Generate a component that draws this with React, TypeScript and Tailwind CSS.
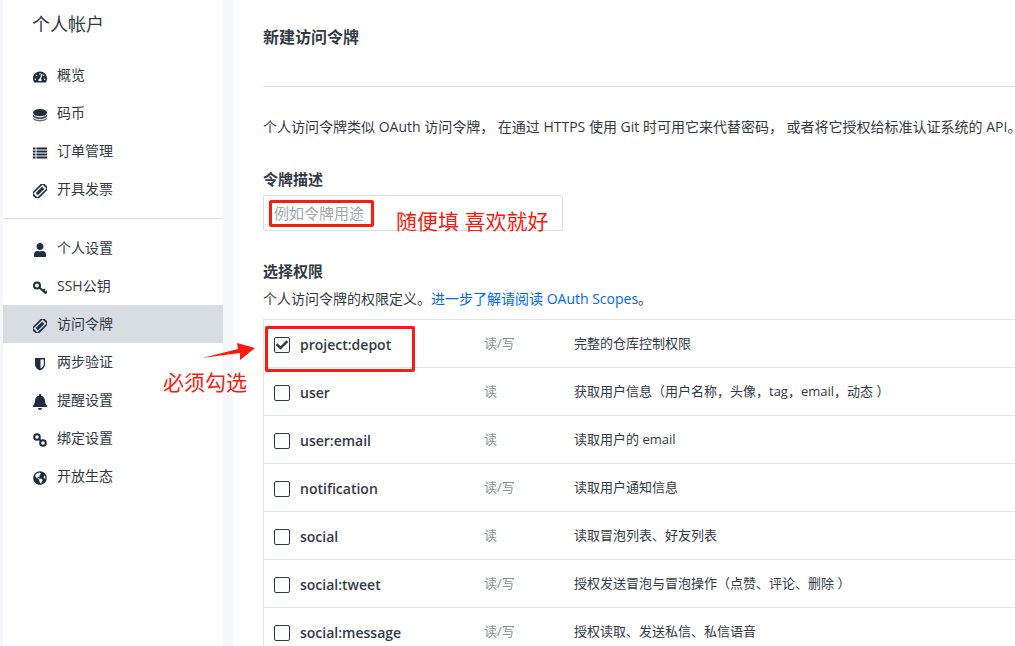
import { FaTachometerAlt, FaUser, FaBell, FaGlobeAmericas, FaCheck } from "react-icons/fa";

function CoinsIcon({ className }: { className?: string }) {
    return (
        <svg className={className} viewBox="0 0 14 14" fill="currentColor">
            <ellipse cx="7" cy="4.6" rx="7" ry="3.6" />
            <path d="M0 6.6C1 8.4 3.8 9.4 7 9.4S13 8.4 14 6.6V8C14 9.6 11 11 7 11S0 9.6 0 8Z" opacity="0.85" />
            <path d="M0 9.4C1 11 3.8 11.8 7 11.8S13 11 14 9.4V10.6C14 12.2 11 13.4 7 13.4S0 12.2 0 10.6Z" opacity="0.7" />
        </svg>
    );
}

function ListIcon({ className }: { className?: string }) {
    return (
        <svg className={className} viewBox="0 0 14 14" fill="currentColor">
            <path d="M0 1.5H2.5V3.5H0ZM3.5 1.5H14V3.5H3.5ZM0 4.5H2.5V6.5H0ZM3.5 4.5H14V6.5H3.5ZM0 7.5H2.5V9.5H0ZM3.5 7.5H14V9.5H3.5ZM0 10.5H2.5V12.5H0ZM3.5 10.5H14V12.5H3.5Z" />
        </svg>
    );
}

function LinkIcon({ className }: { className?: string }) {
    return (
        <svg className={className} viewBox="0 0 14 14" fill="none" stroke="currentColor" strokeWidth="2">
            <circle cx="4" cy="4" r="2.8" />
            <circle cx="10" cy="10" r="2.8" />
            <path d="M5.5 5.5L8.5 8.5" />
        </svg>
    );
}

function TicketIcon({ className }: { className?: string }) {
    return (
        <svg className={className} viewBox="0 0 14 14" fill="currentColor">
            <g transform="rotate(-45 7 7)">
                <path fillRule="evenodd" d="M-2.5 2.5H16.5V5.5A1.5 1.5 0 0 0 16.5 8.5V11.5H-2.5V8.5A1.5 1.5 0 0 0 -2.5 5.5ZM0.5 4.2V9.8H13.5V4.2Z" />
                <rect x="2.5" y="5.5" width="9" height="3" />
            </g>
        </svg>
    );
}

function KeyIcon({ className }: { className?: string }) {
    return (
        <svg className={className} viewBox="0 0 14 14" fill="none" stroke="currentColor" strokeWidth="2">
            <circle cx="4" cy="4.5" r="3" />
            <path d="M6.2 6.6L13 12.5M10.2 10L11.8 8.2M12.4 12L14 10.2" />
        </svg>
    );
}

function ShieldIcon({ className }: { className?: string }) {
    return (
        <svg className={className} viewBox="0 0 14 14" fill="currentColor">
            <path fillRule="evenodd" d="M2 1H12V7C12 10.5 9.5 12.5 7 13.5C4.5 12.5 2 10.5 2 7ZM7.5 2.5V11.5C9.5 10.5 10.8 9 10.8 7V2.5Z" />
        </svg>
    );
}

function BellIcon() {
    return <FaBell className="w-[16px] h-[16px] -ml-px text-[#1f2d3d]" />;
}

const navTop = [
    { icon: FaTachometerAlt, label: "概览" },
    { icon: CoinsIcon, label: "码币" },
    { icon: ListIcon, label: "订单管理" },
    { icon: TicketIcon, label: "开具发票" },
];

const navBottom = [
    { icon: FaUser, label: "个人设置" },
    { icon: KeyIcon, label: "SSH公钥" },
    { icon: TicketIcon, label: "访问令牌", active: true },
    { icon: ShieldIcon, label: "两步验证" },
    { icon: BellIcon, label: "提醒设置" },
    { icon: LinkIcon, label: "绑定设置" },
    { icon: FaGlobeAmericas, label: "开放生态" },
];

const scopes = [
    { name: "project:depot", perm: "读/写", desc: "完整的仓库控制权限", checked: true },
    { name: "user", perm: "读", desc: "获取用户信息（用户名称，头像，tag，email，动态 ）" },
    { name: "user:email", perm: "读", desc: "读取用户的 email" },
    { name: "notification", perm: "读/写", desc: "读取用户通知信息" },
    { name: "social", perm: "读", desc: "读取冒泡列表、好友列表" },
    { name: "social:tweet", perm: "读/写", desc: "授权发送冒泡与冒泡操作（点赞、评论、删除 ）" },
    { name: "social:message", perm: "读/写", desc: "授权读取、发送私信、私信语音" },
];

function NavRow({ item }: { item: { icon: any; label: string; active?: boolean } }) {
    return (
        <div className={`h-[38px] flex items-center pl-[30px] pb-[2px] text-[14px] text-[#323a45] ${item.active ? "bg-[#d8dce3]" : ""}`}>
            <span className="w-[24px] flex mt-[5px]">
                <item.icon className="w-[14px] h-[14px] text-[#1f2d3d]" />
            </span>
            {item.label}
        </div>
    );
}

export default function App() {
    return (
        <div className="relative h-[646px] w-[1015px] overflow-hidden flex bg-[#f5f7fb] pl-[3px] font-['Open_Sans','Noto_Sans_CJK_SC',sans-serif] text-[#323a45]">
            <aside className="w-[220px] shrink-0 bg-white">
                <div className="h-[56px] pl-[29px] pt-[11px] text-[18px] leading-[26px]">个人帐户</div>
                {navTop.map((item) => <NavRow key={item.label} item={item} />)}
                <div className="mt-[10px] mb-[10px] h-px bg-[#dadde4]" />
                {navBottom.map((item) => <NavRow key={item.label} item={item} />)}
            </aside>

            <main className="ml-[10px] flex-1 min-w-0 bg-white pl-[30px]">
                <h1 className="h-[87px] pt-[26px] text-[16px] leading-[22px] font-semibold border-b border-[#dadde4]">新建访问令牌</h1>
                <p className="mt-[30px] text-[14px] leading-[20px] whitespace-nowrap">个人访问令牌类似 OAuth 访问令牌， 在通过 HTTPS 使用 Git 时可用它来代替密码， 或者将它授权给标准认证系统的 API<span className="tracking-[-7px]">。</span></p>

                <div className="mt-[32px] text-[15px] leading-[20px] font-semibold">令牌描述</div>
                <div className="mt-[6px] h-[36px] w-[300px] border border-[#dadde4] rounded-[2px] flex items-center pl-[10px] text-[15px] text-[#a0a6af]">例如令牌用途</div>

                <div className="mt-[30px] text-[15px] leading-[20px] font-semibold">选择权限</div>
                <p className="mt-[8px] text-[14px] leading-[20px] whitespace-nowrap">
                    个人访问令牌的权限定义。<span className="text-[#0066ff]">进一步了解请阅读 OAuth Scopes</span>。
                </p>

                <div className="mt-[10px] w-[900px] border-l border-t border-[#e3e5e8]">
                    {scopes.map((s) => (
                        <div key={s.name} className="h-[48px] flex items-center border-b border-[#e3e5e8] pt-[2px] text-[13px]">
                            <span className="ml-[10px] mt-[1px] w-[16px] h-[16px] border border-[#323a45] rounded-[2px] flex items-center justify-center">
                                {s.checked && <FaCheck className="w-[12px] h-[12px] text-[#323a45]" />}
                            </span>
                            <span className="ml-[10px] w-[184px] text-[14px] font-semibold">{s.name}</span>
                            <span className="w-[90px] mb-[2px] text-[#8a9099]">{s.perm}</span>
                            <span className="mb-[2px] whitespace-nowrap">{s.desc}</span>
                        </div>
                    ))}
                </div>
            </main>

            {/* annotations drawn over the page */}
            <div className="absolute left-[269px] top-[200px] w-[105px] h-[27px] border-[3px] border-[#fb1b10] rounded-[2px]" />
            <div className="absolute left-[265px] top-[326px] w-[150px] h-[46px] border-[3px] border-[#fb1b10] rounded-[2px]" />
            <div className="absolute left-[396px] top-[206px] text-[21px] leading-[30px] text-[#fb1b10] whitespace-nowrap">随便填 喜欢就好</div>
            <div className="absolute left-[163px] top-[367px] text-[21px] leading-[30px] text-[#fb1b10] whitespace-nowrap">必须勾选</div>
            <svg className="absolute left-[200px] top-[340px]" width="56" height="22" viewBox="0 0 56 22">
                <path d="M2 18L38 9L37 3L55 8L40 20L40 13Z" fill="#fb1b10" />
            </svg>
        </div>
    );
}
